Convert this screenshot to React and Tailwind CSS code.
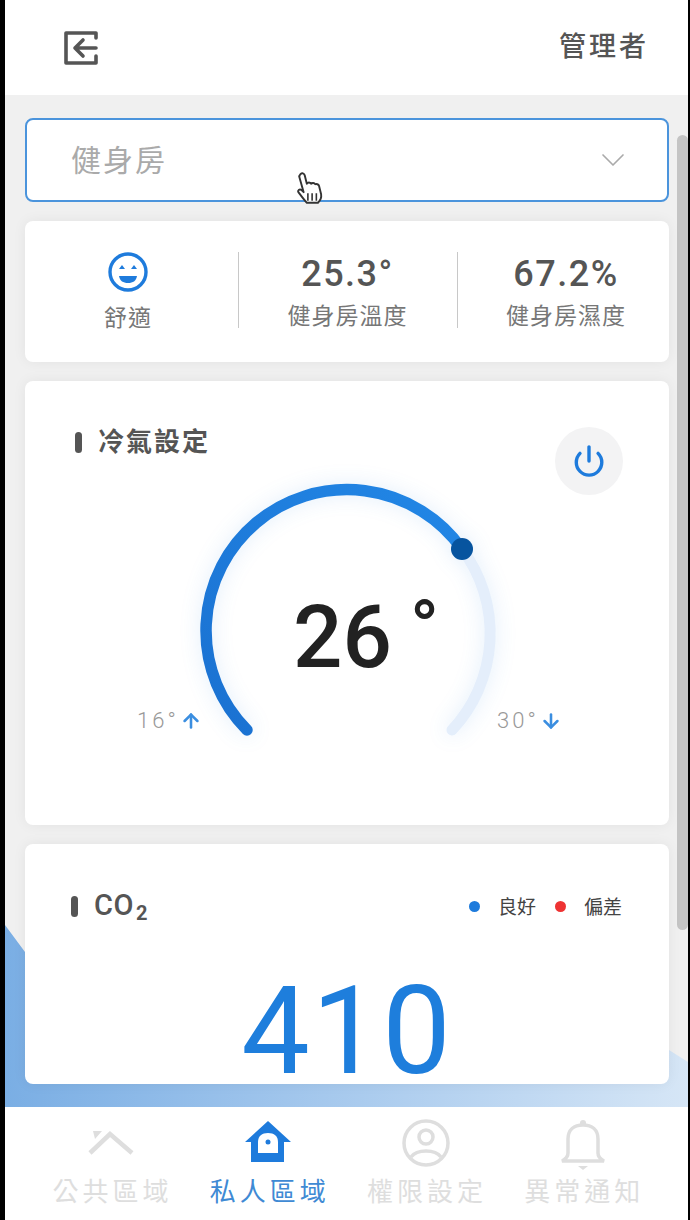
import React from "react";
import { ChevronDown, Power, ArrowUp, ArrowDown } from "lucide-react";

const sans = "font-['Roboto','Noto_Sans_CJK_TC',sans-serif]";

function ExitIcon() {
  return (
    <svg width="36" height="36" viewBox="0 0 36 36" fill="none" stroke="#555" strokeWidth="3.6" strokeLinejoin="round" strokeLinecap="round">
      <path d="M33 8V3H3v30h30v-7" />
      <path d="M33 18H12M20 10l-8 8 8 8" />
    </svg>
  );
}

function SmileIcon() {
  return (
    <svg width="40" height="40" viewBox="0 0 40 40" fill="none">
      <circle cx="20" cy="20" r="18" stroke="#1e7bdc" strokeWidth="3.4" />
      <path d="M11 17l3-4 3 4zM23 17l3-4 3 4z" fill="#1e7bdc" />
      <path d="M11 24h18c-1 5-4 7-9 7s-8-2-9-7z" fill="#1e7bdc" />
    </svg>
  );
}

function HandCursor() {
  return (
    <svg className="absolute left-[267px] top-[51px]" width="32" height="36" viewBox="0 0 30 34">
      <path
        d="M6 3c1.500-1.500 3.500-1 4 1l2 8c1-1.500 3-1.500 4 0 1-1 3-1 4 .5 1-.5 3 0 3.500 1.500l2 8c.5 3-1 6-3 8H12c-2-2-5-6-8-10-1-1.500 1-3.500 3-2l2 2L5 6c-.3-1 0-2 1-3z"
        fill="#fff"
        stroke="#333"
        strokeWidth="1.8"
        strokeLinejoin="round"
      />
      <path d="M13 21v7M17 21v7M21 21v7" stroke="#333" strokeWidth="1.500" />
    </svg>
  );
}

function Gauge() {
  return (
    <div className="relative w-[450px] h-[290px] ml-[95px] -mt-[25px]">
      <svg className="drop-shadow-[0_0_10px_rgba(30,123,220,0.14)]" width="450" height="290" viewBox="0 0 450 290" fill="none">
        <defs>
          <linearGradient id="gaugeBlue" x1="0" y1="1" x2="1" y2="0">
            <stop offset="0" stopColor="#1a71d1" />
            <stop offset="1" stopColor="#2287e6" />
          </linearGradient>
        </defs>
        <path d="M342 79A141 141 0 0 1 332 260" stroke="#e4eefb" strokeWidth="11" strokeLinecap="round" />
        <path d="M127 260A141 141 0 1 1 342 79" stroke="url(#gaugeBlue)" strokeWidth="11.500" strokeLinecap="round" />
        <circle cx="342" cy="79" r="11" fill="#07549f" />
      </svg>
      <span className="absolute left-[173px] top-[124px] font-['Roboto',sans-serif] text-[87px] leading-[87px] font-medium text-[#222]">26</span>
      <span className="absolute left-[290px] top-[120px] font-['Roboto',sans-serif] text-[76px] leading-[76px] font-medium text-[#222]">°</span>
      <div className="absolute left-[17px] top-[238px] flex items-center font-['Roboto',sans-serif] text-[22px] leading-[26px] font-light tracking-[3px] text-[#999]">
        16°<ArrowUp className="ml-[1px] text-[#3b8ee0]" size={22} strokeWidth={2.8} />
      </div>
      <div className="absolute left-[377px] top-[238px] flex items-center font-['Roboto',sans-serif] text-[22px] leading-[26px] font-light tracking-[3px] text-[#999]">
        30°<ArrowDown className="ml-[1px] text-[#3b8ee0]" size={22} strokeWidth={2.8} />
      </div>
    </div>
  );
}

function StatCell({ value, label, divider, className = "" }) {
  return (
    <div className={`relative flex flex-col items-center ${className}`}>
      {divider && <div className="absolute left-0 top-[31px] h-[76px] w-px bg-[#c8c8c8]" />}
      {value}
      <span className="text-[23px] leading-[28px] tracking-[1px] text-[#777]">{label}</span>
    </div>
  );
}

function StatValue({ children }) {
  return <span className="mt-[34px] mb-[10px] text-[36px] leading-[38px] font-medium tracking-[1.5px] text-[#555]">{children}</span>;
}

function RoofIcon() {
  return (
    <svg width="48" height="40" viewBox="0 0 48 40" fill="none">
      <path d="M3 32L23 13l22 19" stroke="#dedede" strokeWidth="4.500" />
      <path d="M6 10h9l-7 8z" fill="#dedede" />
    </svg>
  );
}

function HomeLockIcon() {
  return (
    <svg width="48" height="42" viewBox="0 0 48 42">
      <path d="M24 0L47 21h-7v20H7V21H1z" fill="#1e7bdc" />
      <path d="M14 32V21c0-6 4-9 10-9s10 3 10 9v11z" fill="#fff" />
      <circle cx="24" cy="21" r="2.500" fill="#1e7bdc" />
    </svg>
  );
}

function UserIcon() {
  return (
    <svg width="48" height="48" viewBox="0 0 48 48" fill="none" stroke="#dedede" strokeWidth="3.500">
      <circle cx="24" cy="24" r="22" />
      <circle cx="24" cy="18" r="7" />
      <path d="M9 38c3-4 9-6 15-6s12 2 15 6" />
    </svg>
  );
}

function BellIcon() {
  return (
    <svg width="48" height="54" viewBox="0 0 48 54" fill="none" stroke="#dedede" strokeWidth="3.500">
      <path d="M3 42h42c-4-2-6-4-6-8V20C39 11 33 6 24 6S9 11 9 20v14c0 4-2 6-6 8z" />
      <circle cx="24" cy="4" r="3" fill="#dedede" stroke="none" />
      <path d="M19 47h10l-5 4z" fill="#dedede" stroke="none" />
    </svg>
  );
}

const navItems = [
  { label: "公共區域", icon: <RoofIcon />, iconClass: "", active: false },
  { label: "私人區域", icon: <HomeLockIcon />, iconClass: "pt-[2px]", active: true },
  { label: "權限設定", icon: <UserIcon />, iconClass: "pt-[4px]", active: false },
  { label: "異常通知", icon: <BellIcon />, iconClass: "pt-[9px]", active: false },
];

export default function App() {
  return (
    <div className={`${sans} flex h-[1220px] w-[690px] flex-col border-l-[5px] border-r-2 border-black bg-white`}>
      {/* Header */}
      <header className="flex h-[95px] shrink-0 items-center justify-between pl-[58px] pr-[39px]">
        <ExitIcon />
        <span className="text-[27px] font-medium tracking-[3px] text-[#555]">管理者</span>
      </header>

      {/* Scrollable content */}
      <main className="relative flex-1 overflow-hidden bg-[#f0f0f0] pl-5 pr-[19px] pt-[23px]">
        <div className="absolute inset-0 bg-gradient-to-r from-[#7aaee4] to-[#d6e6f6] [clip-path:polygon(0_830px,20px_857px,664px_955px,683px_967px,683px_1012px,0_1012px)]" />
        <div className="absolute right-0 top-[40px] h-[795px] w-[11px] rounded-full bg-[#c4c4c4]" />

        <div className="relative flex flex-col gap-[19px]">
          {/* Room select */}
          <div className="relative flex h-[84px] items-center justify-between rounded-lg border-2 border-[#4b94dc] bg-white pl-[44px] pr-[34px]">
            <span className="text-[30px] tracking-[2px] text-[#aaa]">健身房</span>
            <ChevronDown className="text-[#aaa]" size={40} strokeWidth={1} />
            <HandCursor />
          </div>

          {/* Status */}
          <div className="grid h-[141px] grid-cols-[213px_219px_1fr] rounded-lg bg-white shadow-[0_0_14px_rgba(0,0,0,0.06)]">
            <StatCell
              className="pr-[7px]"
              value={<span className="mt-[31px] mb-[13px]"><SmileIcon /></span>}
              label="舒適"
            />
            <StatCell divider value={<StatValue>25.3°</StatValue>} label="健身房溫度" />
            <StatCell divider className="pl-[6px]" value={<StatValue>67.2%</StatValue>} label="健身房濕度" />
          </div>

          {/* AC */}
          <section className="h-[444px] rounded-lg bg-white shadow-[0_0_14px_rgba(0,0,0,0.06)]">
            <div className="flex h-[114px] items-start justify-between pl-[50px] pr-[46px] pt-[46px]">
              <div className="flex items-center gap-[16px]">
                <div className="h-[21px] w-[7px] rounded-full bg-[#555]" />
                <span className="text-[26px] leading-[30px] font-bold tracking-[2px] text-[#555]">冷氣設定</span>
              </div>
              <div className="flex h-[68px] w-[68px] items-center justify-center rounded-full bg-[#f3f3f4]">
                <Power className="text-[#1e7bdc]" size={34} strokeWidth={2.4} />
              </div>
            </div>
            <Gauge />
          </section>

          {/* CO2 */}
          <section className="h-[240px] rounded-lg bg-white shadow-[0_0_14px_rgba(0,0,0,0.06)]">
            <div className="flex items-center justify-between pl-[46px] pr-[47px] pt-[46px]">
              <div className="flex items-center gap-[16px]">
                <div className="h-[21px] w-[7px] rounded-full bg-[#555]" />
                <span className="-translate-y-[2px] text-[29px] leading-[30px] font-medium tracking-[0.5px] text-[#555]">
                  CO<sub className="ml-[2px] text-[20px] font-bold">2</sub>
                </span>
              </div>
              <div className="flex items-center text-[19px] leading-[30px] text-[#444]">
                <div className="h-[11px] w-[11px] rounded-full bg-[#1e7bdc]" />
                <span className="ml-[18px] mr-[19px] pt-[3px]">良好</span>
                <div className="h-[11px] w-[11px] rounded-full bg-[#ee3333]" />
                <span className="ml-[18px] pt-[3px]">偏差</span>
              </div>
            </div>
            <div className="mt-[64px] text-center text-[122px] leading-[90px] font-[450] tracking-[2px] text-[#1e7edc]">410</div>
          </section>
        </div>
      </main>

      {/* Bottom nav */}
      <nav className="grid h-[113px] shrink-0 grid-cols-4 pl-[29px] pr-[25px]">
        {navItems.map((item) => (
          <div key={item.label} className="flex flex-col items-center">
            <div className={`flex h-[68px] items-center pr-[3px] ${item.iconClass}`}>{item.icon}</div>
            <span className={`text-[26px] leading-[34px] tracking-[4px] ${item.active ? "text-[#3f8ad4]" : "text-[#dedede]"}`}>
              {item.label}
            </span>
          </div>
        ))}
      </nav>
    </div>
  );
}
